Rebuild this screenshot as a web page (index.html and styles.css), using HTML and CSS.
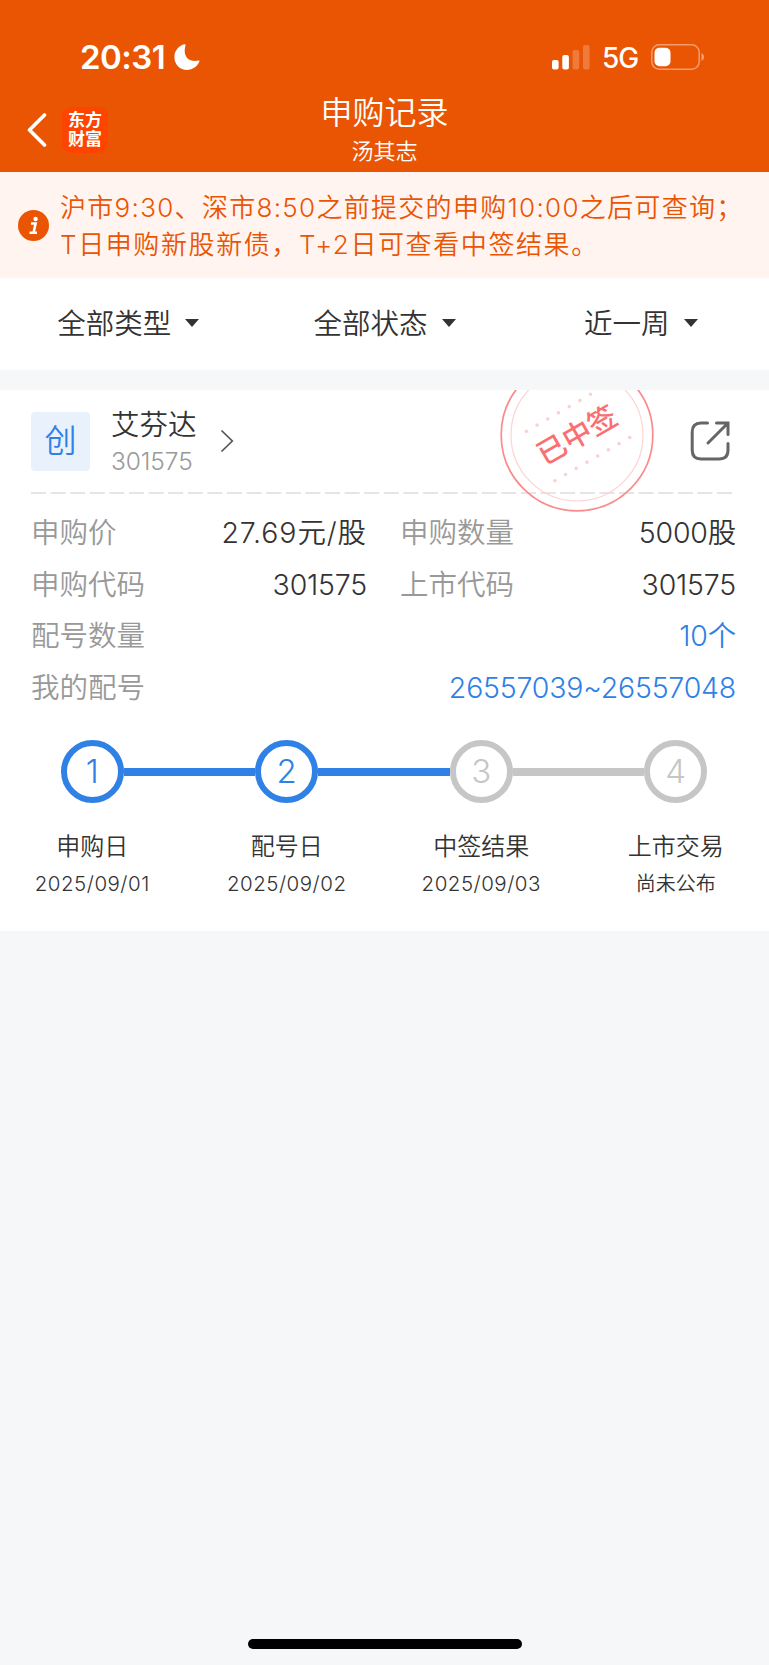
FILE: index.html
```html
<!DOCTYPE html>
<html lang="zh-CN">
<head>
    <meta charset="UTF-8">
    <meta name="viewport" content="width=device-width, initial-scale=1.0">
    <title>申购记录</title>
    <link rel="stylesheet" href="styles.css">
</head>
<body>
    <header class="header">
        <div class="status-bar">
            <div class="status-left">
                <span class="time">20:31</span>
                <svg class="moon" width="26" height="27" viewBox="0 0 26 27"><path d="M10 .3C5 1.8.4 6.500.4 13.200.4 20.500 6.200 26 13 26c5.500 0 10.300-3.300 12.400-8.400.3-.8-.2-1.200-.9-1-1.100.3-2.200.5-3.500.5-6.300 0-10.300-4.100-10.300-10.300 0-2 .3-3.900.8-5.400.3-.8-.5-1.400-1.500-1.100z" fill="#fff"/></svg>
            </div>
            <div class="status-right">
                <svg width="38" height="25" viewBox="0 0 38 25" fill="#fff">
                    <rect x="0" y="15" width="6.600" height="9.500" rx="2"/>
                    <rect x="10.300" y="10" width="6.600" height="14.500" rx="2"/>
                    <rect x="20.600" y="5" width="6.600" height="19.500" rx="2" opacity=".22"/>
                    <rect x="31" y="0" width="6.600" height="24.500" rx="2" opacity=".22"/>
                </svg>
                <span class="network">5G</span>
                <svg width="54" height="26" viewBox="0 0 54 26">
                    <rect x=".8" y=".8" width="47.400" height="24.400" rx="7.500" fill="none" stroke="#fff" stroke-opacity=".42" stroke-width="1.500"/>
                    <rect x="3.500" y="3.800" width="16" height="18.400" rx="5" fill="#fff"/>
                    <path d="M50.500 9v8c1.500-.7 2.500-2.200 2.500-4s-1-3.300-2.500-4z" fill="#fff" opacity=".45"/>
                </svg>
            </div>
        </div>
        <div class="nav">
            <div class="nav-left">
                <svg width="20" height="34" viewBox="0 0 20 34"><path d="M17.500 2L2.500 17l15 15" fill="none" stroke="#fff" stroke-width="3.600" stroke-linecap="round" stroke-linejoin="round"/></svg>
                <div class="logo"><span>东方</span><span>财富</span></div>
            </div>
            <div class="nav-title">
                <h1>申购记录</h1>
                <p>汤其志</p>
            </div>
        </div>
    </header>

    <div class="notice">
        <svg class="info" width="31" height="31" viewBox="0 0 31 31">
            <circle cx="15.500" cy="15.500" r="15.500" fill="#ea5504"/>
            <circle cx="17.600" cy="9" r="2.200" fill="#fff"/>
            <path d="M13 13.500h4.600l-2 9M11.500 22.800h7.500" fill="none" stroke="#fff" stroke-width="2.600"/>
        </svg>
        <p><span class="line-one">沪市9:30、深市8:50之前提交的申购10:00之后可查询；</span><br><span class="line-two">T日申购新股新债，T+2日可查看中签结果。</span></p>
    </div>

    <div class="filters">
        <div class="filter">全部类型<i class="caret"></i></div>
        <div class="filter">全部状态<i class="caret"></i></div>
        <div class="filter">近一周<i class="caret"></i></div>
    </div>

    <main class="card">
        <!-- 中签印章 -->
        <svg class="stamp" width="154" height="122" viewBox="0 0 154 122">
            <circle cx="77" cy="45" r="75.800" fill="none" stroke="#fa8a8c" stroke-width="1.700"/>
            <circle cx="77" cy="45" r="66" fill="none" stroke="#fdd3d3" stroke-width="1.200"/>
            <g transform="rotate(-30 77 45)">
                <path d="M35 16.500h90M35 73.500h90" fill="none" stroke="#fcd0d0" stroke-width="3.400" stroke-linecap="round" stroke-dasharray="0 12.350"/>
                <text x="77" y="55.500" text-anchor="middle" class="stamp-text">已中签</text>
            </g>
        </svg>

        <div class="card-head">
            <div class="badge">创</div>
            <div class="stock">
                <div class="stock-name">艾芬达</div>
                <div class="stock-code">301575</div>
            </div>
            <svg class="arrow" width="14" height="24" viewBox="0 0 14 24"><path d="M1.500 1.500L12.300 12 1.500 22.500" fill="none" stroke="#555" stroke-width="1.700"/></svg>
            <svg class="share" width="40" height="40" viewBox="0 0 40 40" fill="none" stroke="#666" stroke-width="3" stroke-linecap="round">
                <path d="M17.500 2H11Q2.200 2 2.200 11v18q0 9 8.800 9h18q9 0 9-9v-6.500"/>
                <path d="M26.500 2H38v11.500M37 3L18 22"/>
            </svg>
        </div>
        <svg class="divider" width="702" height="2"><path d="M0 1h702" stroke="#ddd" stroke-width="1.500" stroke-dasharray="15 4.600"/></svg>

        <div class="details">
            <div class="row"><span class="label">申购价</span><span class="value price">27.69元/股</span></div>
            <div class="row"><span class="label">申购数量</span><span class="value">5000股</span></div>
            <div class="row"><span class="label">申购代码</span><span class="value">301575</span></div>
            <div class="row"><span class="label">上市代码</span><span class="value">301575</span></div>
            <div class="row wide"><span class="label">配号数量</span><span class="value link">10个</span></div>
            <div class="row wide"><span class="label">我的配号</span><span class="value link">26557039~26557048</span></div>
        </div>

        <div class="steps">
            <div class="step done">
                <div class="track"><span class="circle">1</span></div>
                <div class="step-name">申购日</div>
                <div class="step-date">2025/09/01</div>
            </div>
            <div class="step done">
                <div class="track"><span class="circle">2</span></div>
                <div class="step-name">配号日</div>
                <div class="step-date">2025/09/02</div>
            </div>
            <div class="step">
                <div class="track"><span class="circle">3</span></div>
                <div class="step-name">中签结果</div>
                <div class="step-date">2025/09/03</div>
            </div>
            <div class="step">
                <div class="track"><span class="circle">4</span></div>
                <div class="step-name">上市交易</div>
                <div class="step-date cjk">尚未公布</div>
            </div>
        </div>
    </main>

    <div class="home-bar"></div>
</body>
</html>
```
FILE: styles.css
```css
* {
    box-sizing: border-box;
}

body {
    margin: 0;
    height: 1665px;
    display: flex;
    flex-direction: column;
    font-family: Inter, "Noto Sans CJK SC", sans-serif;
    font-weight: 350;
    background-color: #f6f7f9;
    color: #333;
    overflow: hidden;
}

h1, p {
    margin: 0;
    font-weight: 350;
}

svg {
    display: block;
    flex: none;
}

/* 顶部 */
.header {
    height: 172px;
    background-color: #ea5504;
    color: #fff;
}

.status-bar {
    display: flex;
    justify-content: space-between;
    height: 92px;
    padding: 37px 64px 0 80px;
}

.status-left,
.status-right {
    display: flex;
    align-items: center;
    height: 40px;
}

.time {
    font-size: 33px;
    font-weight: 600;
    letter-spacing: -0.5px;
    width: 94px;
}

.status-right {
    gap: 12px;
}

.network {
    width: 37px;
    padding-top: 2px;
    font-size: 28px;
    font-weight: 500;
    letter-spacing: -1px;
}

.nav {
    display: grid;
    grid-template-columns: 1fr auto 1fr;
    height: 80px;
}

.nav-left {
    display: flex;
    align-items: center;
    gap: 15px;
    height: 76px;
    padding-left: 27px;
}

.logo {
    display: flex;
    flex-direction: column;
    align-items: center;
    justify-content: center;
    width: 46px;
    height: 46px;
    border-radius: 9px;
    background-color: #ff4400;
    font-size: 17px;
    font-weight: 700;
    line-height: 19px;
}

.nav-title {
    text-align: center;
}

.nav-title h1 {
    font-size: 32px;
    line-height: 42px;
}

.nav-title p {
    font-size: 22px;
    line-height: 34px;
}

/* 提示 */
.notice {
    display: flex;
    align-items: center;
    height: 106px;
    padding-left: 18px;
    background-color: #fff4ef;
    color: #ea5504;
}

.notice p {
    margin-left: 11px;
    padding-top: 2px;
    font-size: 26px;
    line-height: 37.5px;
    white-space: nowrap;
}

.line-one {
    letter-spacing: 1.3px;
}

.line-two {
    letter-spacing: 1.6px;
}

/* 筛选 */
.filters {
    display: grid;
    grid-template-columns: repeat(3, 1fr);
    height: 92px;
    margin-bottom: 20px;
    padding-bottom: 5px;
    background-color: #fff;
    font-size: 28.5px;
}

.filter {
    display: flex;
    align-items: center;
    justify-content: center;
    gap: 14px;
}

.caret {
    margin-top: 2px;
    border: 7px solid transparent;
    border-top: 8px solid #333;
    border-bottom: 0;
}

/* 申购卡片 */
.card {
    position: relative;
    height: 541px;
    padding: 0 32px 0 31px;
    background-color: #fff;
}

.stamp {
    position: absolute;
    left: 500px;
    top: 0;
}

.stamp-text {
    font-size: 29px;
    font-weight: 500;
    fill: #f97072;
}

.card-head {
    display: flex;
    align-items: center;
    height: 102px;
    padding-right: 7px;
}

.badge {
    width: 59px;
    height: 59px;
    border-radius: 4px;
    background-color: #e9f2fc;
    color: #3081e6;
    font-size: 32px;
    line-height: 58px;
    text-align: center;
}

.stock {
    width: 109px;
    margin-left: 21px;
    padding-top: 2px;
}

.stock-name {
    font-size: 28.5px;
    line-height: 38px;
}

.stock-code {
    font-size: 24.5px;
    line-height: 34px;
    letter-spacing: -0.1px;
    color: #999;
}

.share {
    margin-left: auto;
}

.details {
    display: grid;
    grid-template-columns: 336px 336px;
    column-gap: 33px;
    padding-top: 13px;
    font-size: 28.5px;
}

.row {
    display: flex;
    justify-content: space-between;
    height: 51.6px;
    line-height: 51.6px;
}

.wide {
    grid-column: 1 / 3;
}

.label {
    color: #999;
}

.value {
    letter-spacing: -0.2px;
}

.price {
    letter-spacing: 0.9px;
}

.link {
    color: #3081e6;
}

/* 进度 */
.steps {
    display: grid;
    grid-template-columns: repeat(4, 1fr);
    margin: 27px -36px 0 -36px;
    text-align: center;
}

.track {
    display: flex;
    align-items: center;
    height: 63px;
    color: #c6c6c6;
}

.track::before,
.track::after {
    content: "";
    flex: 1;
    height: 7.5px;
    background-color: #c6c6c6;
}

.step:first-child .track::before,
.step:last-child .track::after {
    background-color: transparent;
}

.done .track {
    color: #3081e6;
}

.done .track::before,
.done .track::after,
.done + .step .track::before {
    background-color: #3081e6;
}

.circle {
    width: 63px;
    height: 63px;
    border: 6px solid;
    border-radius: 50%;
    font-size: 33px;
    font-weight: 300;
    line-height: 51px;
}

.step-name {
    margin-top: 26px;
    font-size: 24px;
    line-height: 36px;
}

.step-date {
    font-size: 20.5px;
    line-height: 38px;
    letter-spacing: 0.5px;
}

.step-date.cjk {
    font-size: 20px;
    letter-spacing: 0;
}

.home-bar {
    width: 274px;
    height: 10px;
    margin: auto auto 16px;
    border-radius: 5px;
    background-color: #000;
}
```
